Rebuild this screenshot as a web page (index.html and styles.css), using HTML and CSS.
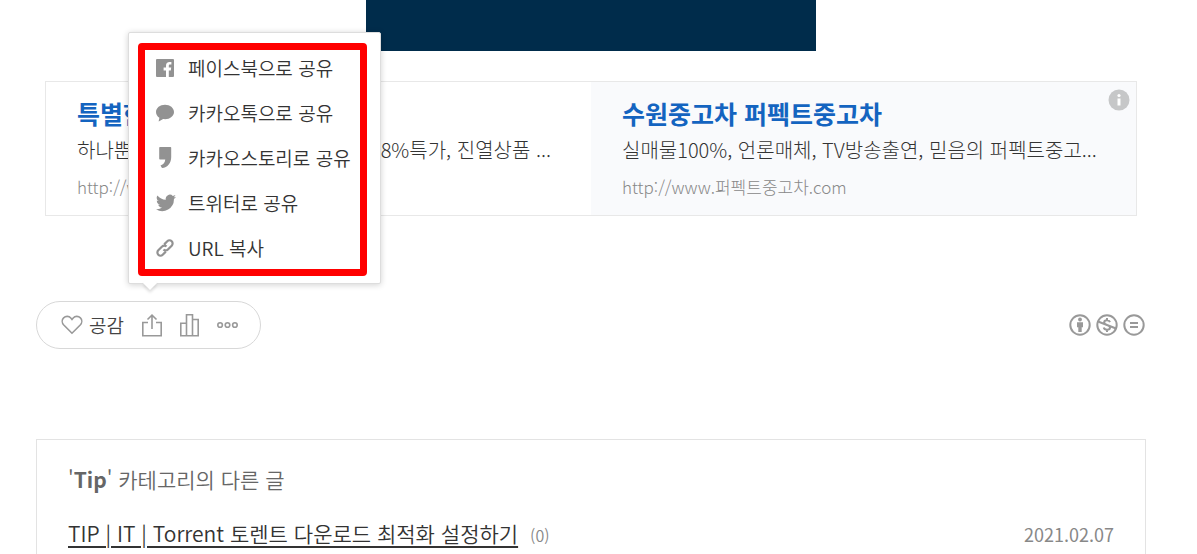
FILE: index.html
```html
<!DOCTYPE html>
<html lang="ko">
<head>
	<title>Tip</title>
	<meta charset="utf-8" />
	<meta name="viewport" content="width=device-width, initial-scale=1.0">
	<link rel="stylesheet" href="styles.css">
</head>
<body>
	<div id="wrap">
		<div class="banner"></div>

		<div class="ads">
			<div class="ad">
				<a href="#" class="ad-title">특별한</a>
				<p class="ad-desc split"><span>하나뿐</span><span>8%특가, 진열상품 ...</span></p>
				<a href="#" class="ad-url">http://www</a>
			</div>
			<div class="ad shaded">
				<a href="#" class="ad-title">수원중고차 퍼펙트중고차</a>
				<p class="ad-desc">실매물100%, 언론매체, TV방송출연, 믿음의 퍼펙트중고...</p>
				<a href="#" class="ad-url">http://www.퍼펙트중고차.com</a>
				<button class="info" aria-label="광고 정보">
					<svg width="22" height="22" viewBox="0 0 22 22"><circle cx="11" cy="11" r="10.5" fill="#c6c7c8"/><circle cx="11" cy="6.5" r="1.6" fill="#fff"/><path d="M9.5 9.5h3v7h-3z" fill="#fff"/></svg>
				</button>
			</div>
		</div>

		<div class="post-bar">
			<div class="actions">
				<button class="like">
					<svg width="22" height="20" viewBox="0 0 22 20"><path d="M11 18.2L2.8 10C.7 7.8.8 4.700 2.600 2.900C4.700.8 8 1 9.800 3L11 4.400L12.200 3C14 1 17.300.8 19.400 2.900C21.200 4.700 21.300 7.800 19.200 10Z"/></svg>
					공감
				</button>
				<div class="share">
					<button aria-label="공유하기">
						<svg width="20" height="23" viewBox="0 0 20 23"><path d="M6 8.500H.8V21.700H19.200V8.500H14M10 15V2M5.500 5.500L10 1.200L14.500 5.500"/></svg>
					</button>
					<div class="share-menu">
						<ul>
							<li><a href="#">
								<svg width="18" height="18" viewBox="0 0 18 18"><path fill-rule="evenodd" d="M1 0h16a1 1 0 0 1 1 1v16a1 1 0 0 1-1 1h-4.200v-6.600h2l.4-2.800h-2.400V7c0-.9.300-1.400 1.400-1.400h1.200V3.100C14.800 3 14.400 3 13.500 3c-2.200 0-3.500 1.300-3.500 3.700v1.900H7.600v2.800H10V18H1a1 1 0 0 1-1-1V1a1 1 0 0 1 1-1z"/></svg>
								페이스북으로 공유</a></li>
							<li><a href="#">
								<svg width="18" height="18" viewBox="0 0 18 18"><path d="M9 .8c5 0 9 3.200 9 7.200s-4 7.200-9 7.200c-.7 0-1.300 0-1.900-.1L3.200 17.300c-.4.200-.6 0-.5-.4l.7-3.100C1.300 12.500 0 10.400 0 8C0 4 4 .8 9 .8z"/></svg>
								카카오톡으로 공유</a></li>
							<li><a href="#">
								<svg width="18" height="22" viewBox="0 0 18 22"><path d="M4 0h10.500q.7 0 .7.700V10c0 6-3.500 10.500-9.200 11L4.500 18.400C7.500 17.500 9 15.500 9.300 12.500H4q-.8 0-.8-.8V.8Q3.200 0 4 0z"/></svg>
								카카오스토리로 공유</a></li>
							<li><a href="#">
								<svg width="20" height="18" viewBox="0 0 24 20"><path d="M24 2.400a10 10 0 0 1-2.800.8A4.900 4.900 0 0 0 23.300.5a9.800 9.800 0 0 1-3.100 1.200 4.900 4.900 0 0 0-8.400 4.500A14 14 0 0 1 1.700 1a4.900 4.900 0 0 0 1.500 6.600A4.900 4.900 0 0 1 1 7a4.900 4.900 0 0 0 3.900 4.900 5 5 0 0 1-2.200.1 4.900 4.900 0 0 0 4.600 3.400A9.900 9.900 0 0 1 0 17.500a14 14 0 0 0 21.500-12.400A10 10 0 0 0 24 2.400z"/></svg>
								트위터로 공유</a></li>
							<li><a href="#">
								<svg class="line" width="18" height="18" viewBox="0 0 18 18"><path d="M8.200 5.400L11.300 2.300a3 3 0 0 1 4.400 4.400L11.900 10.500a3 3 0 0 1-4.400 0M9.800 12.600L6.700 15.700a3 3 0 0 1-4.400-4.400L6.100 7.500a3 3 0 0 1 4.400 0"/></svg>
								URL 복사</a></li>
						</ul>
					</div>
				</div>
				<button aria-label="통계">
					<svg width="19" height="23" viewBox="0 0 19 23"><path d="M.8 9.200H6.500V21.700H.8zM6.500.8H12.500V21.700H6.500zM12.500 5.500H18.200V21.700H12.500z"/></svg>
				</button>
				<button aria-label="더보기">
					<svg width="21" height="8" viewBox="0 0 21 8"><circle cx="3.100" cy="4" r="2.300"/><circle cx="10.500" cy="4" r="2.300"/><circle cx="17.900" cy="4" r="2.300"/></svg>
				</button>
			</div>

			<a href="#" class="license" aria-label="저작자표시 비영리 변경금지">
				<svg width="22" height="22" viewBox="0 0 22 22"><circle cx="11" cy="11" r="9.700"/><circle class="fill" cx="11" cy="5.500" r="1.900"/><path class="fill" d="M8 8.200h6v5h-1.300V18H9.300v-4.800H8z"/></svg>
				<svg width="22" height="22" viewBox="0 0 22 22"><circle cx="11" cy="11" r="9.700"/><path d="M14 8.200C13.500 6.800 12.500 6.300 11 6.300c-1.700 0-2.800.8-2.800 2.200C8.200 11.500 14 10.500 14 13.500c0 1.500-1.300 2.300-3 2.300s-2.900-.7-3.300-2.200M11 4v2.300M11 15.800V18M2 7.500L20 14.500"/></svg>
				<svg width="22" height="22" viewBox="0 0 22 22"><circle cx="11" cy="11" r="9.700"/><path d="M7 8.900h8M7 13.100h8"/></svg>
			</a>
		</div>

		<div class="related">
			<h4>'<b>Tip</b>' 카테고리의 다른 글</h4>
			<div class="entry">
				<div><a href="#">TIP | IT | Torrent 토렌트 다운로드 최적화 설정하기</a><span class="count">(0)</span></div>
				<span class="date">2021.02.07</span>
			</div>
		</div>
	</div>
</body>
</html>
```

FILE: styles.css
```css
* {
	box-sizing: border-box;
}
body {
	margin: 0;
	font-family: "Noto Sans CJK KR", sans-serif;
	font-size: 20px;
	font-weight: 350;
	line-height: 30px;
	color: #333;
	background: #fff;
}
#wrap {
	padding: 0 51px 0 36px;
}
a {
	color: inherit;
	text-decoration: none;
}
p, h4, ul {
	margin: 0;
	padding: 0;
}
button {
	display: flex;
	align-items: center;
	border: none;
	padding: 0;
	background: transparent;
	font: inherit;
	color: inherit;
	cursor: pointer;
}
svg {
	display: block;
	flex: none;
}

.banner {
	width: 450px;
	height: 51px;
	margin: 0 auto 30px;
	background: #002c4b;
}

.ads {
	display: grid;
	grid-template-columns: 1fr 1fr;
	margin: 0 9px;
	border: 1px solid #e8e8e8;
}
.ad {
	position: relative;
	min-width: 0;
	padding: 13px 28px 10px 31px;
}
.ad.shaded {
	background: #f9fafc;
}
.ad-title,
.ad-url {
	display: block;
	line-height: 36px;
}
.ad-title {
	font-size: 25px;
	font-weight: 700;
	color: #1464c0;
}
.ad-desc {
	font-weight: 300;
	line-height: 38px;
	white-space: nowrap;
}
.ad-desc.split {
	display: flex;
	justify-content: space-between;
	padding-right: 12px;
}
.ad-url {
	font-size: 17px;
	font-weight: 300;
	color: #888;
}
.info {
	position: absolute;
	top: 7px;
	right: 6px;
}

.post-bar {
	display: flex;
	align-items: center;
	justify-content: space-between;
	margin: 85px 0 90px;
}
.actions {
	display: flex;
	align-items: center;
	gap: 18px;
	height: 48px;
	padding: 0 22px 0 24px;
	border: 1px solid #d8d8d8;
	border-radius: 24px;
}
.actions button svg,
.license svg {
	fill: none;
	stroke: #999;
	stroke-width: 1.6;
}
.like {
	gap: 6px;
	font-size: 19px;
	color: #444;
}
.share {
	position: relative;
}
.share-menu {
	position: absolute;
	bottom: 53px;
	left: -14px;
	width: 253px;
	padding: 10px 13px 7px 9px;
	background: #fff;
	border: 1px solid #ddd;
	border-radius: 2px;
	box-shadow: 0 1px 6px rgba(0,0,0,.18);
}
.share-menu::after {
	content: "";
	position: absolute;
	bottom: -5px;
	left: 16px;
	width: 10px;
	height: 10px;
	background: #fff;
	box-shadow: 2px 2px 3px rgba(0,0,0,.12);
	transform: rotate(45deg);
}
.share-menu ul {
	display: grid;
	row-gap: 9px;
	padding-bottom: 3px;
	list-style: none;
	border: 7px solid #f00;
	border-radius: 4px;
}
.share-menu a {
	display: grid;
	grid-template-columns: 20px 1fr;
	align-items: center;
	column-gap: 12px;
	height: 36px;
	padding-left: 11px;
	font-size: 19px;
	white-space: nowrap;
}
.share-menu svg {
	fill: #929292;
}
.share-menu svg.line {
	fill: none;
	stroke: #929292;
	stroke-width: 2.2;
}
.license {
	display: flex;
	gap: 5px;
	padding-right: 1px;
}
.license svg {
	stroke-width: 2;
}
.license .fill {
	fill: #999;
	stroke: none;
}

.related {
	min-height: 240px;
	padding: 24px 31px;
	border: 1px solid #e3e3e3;
}
.related h4 {
	margin-bottom: 24px;
	font-size: 21px;
	font-weight: 350;
	color: #666;
}
.entry {
	display: flex;
	align-items: center;
	justify-content: space-between;
}
.entry a {
	font-size: 21px;
	text-decoration: underline;
	text-underline-offset: 4px;
}
.count {
	margin-left: 12px;
	font-size: 16px;
	color: #888;
}
.date {
	font-size: 18px;
	font-weight: 400;
	color: #888;
}
```
